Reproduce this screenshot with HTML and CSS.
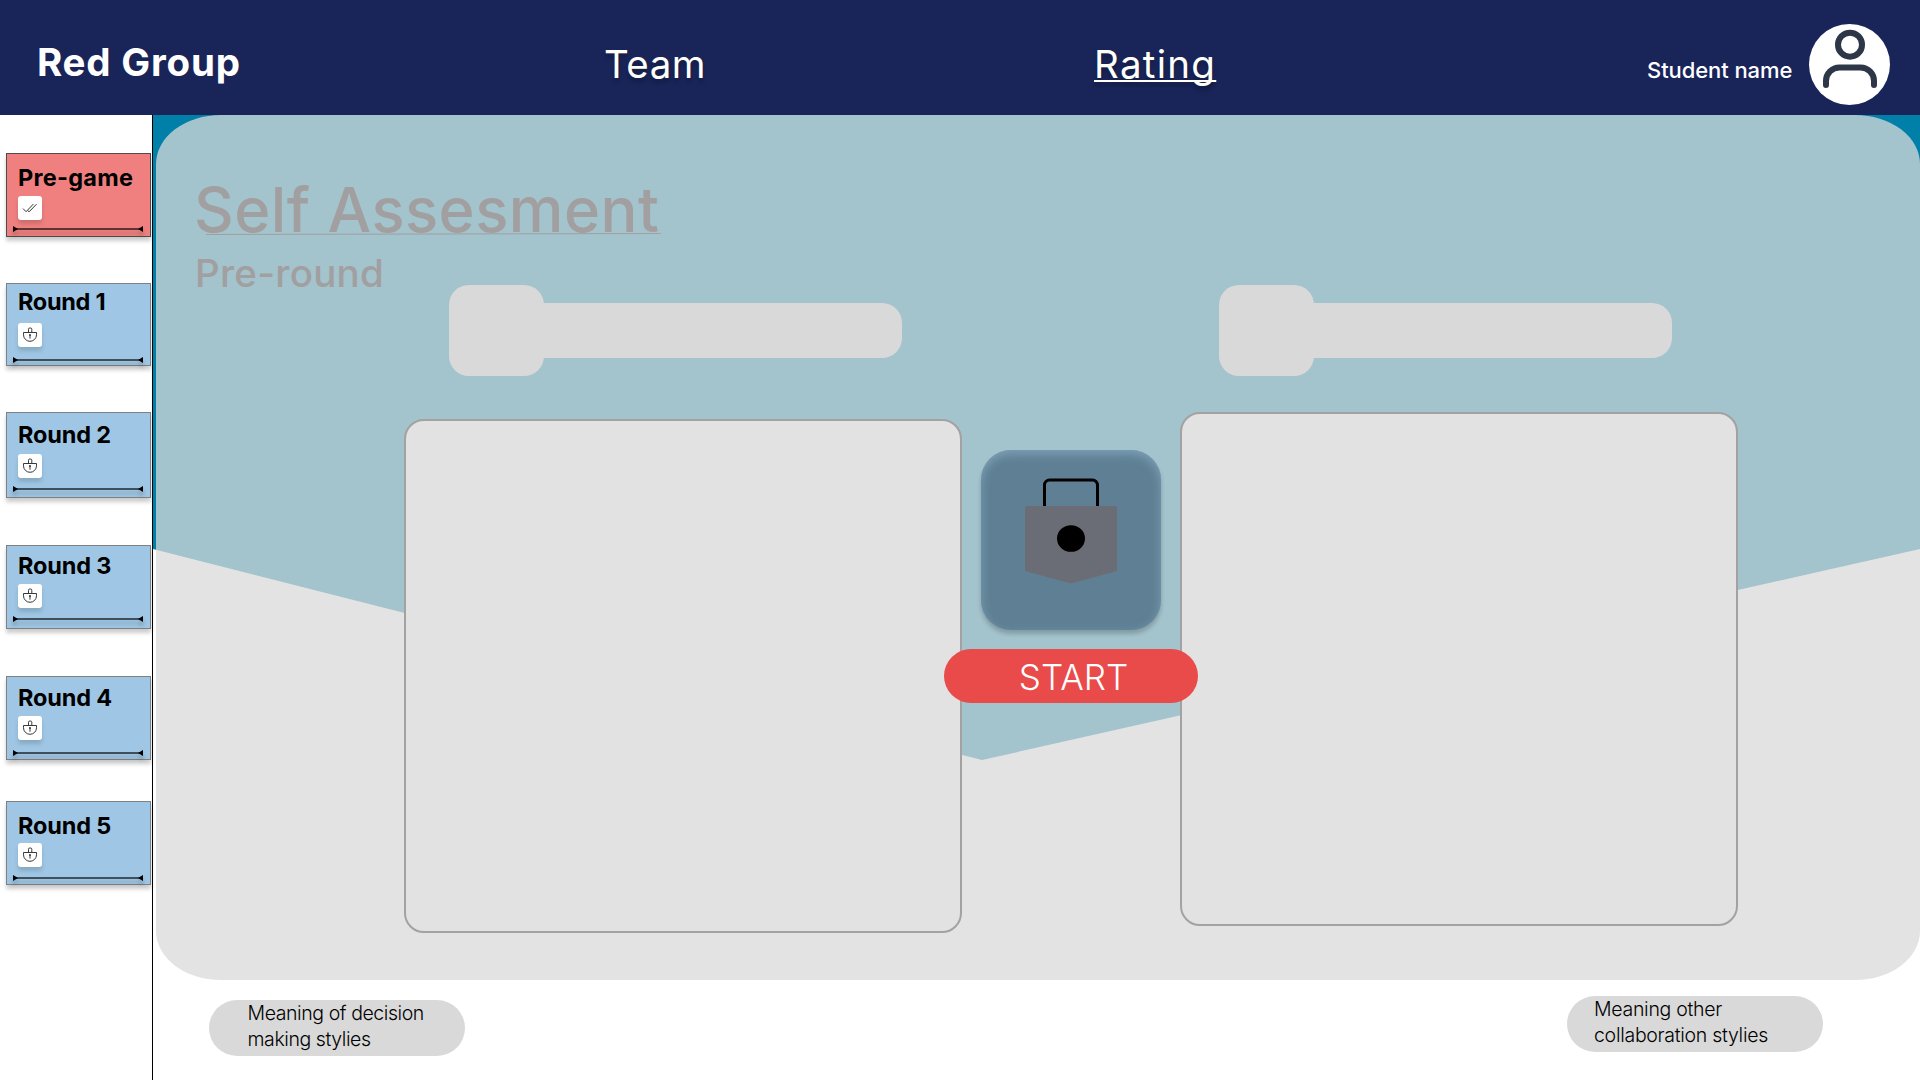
FILE: index.html
```html
<!DOCTYPE html>
<html lang="en">
<head>
<meta charset="utf-8">
<title>Self Assesment</title>
<link rel="stylesheet" href="styles.css">
</head>
<body>
<svg class="defs" width="0" height="0" aria-hidden="true">
  <symbol id="lock" viewBox="0 0 24 24">
    <path d="M5.500 9.500h13v2.300a6.500 6.500 0 0 1-13 0zM10.500 9.200V6.300a1.300 1.300 0 0 1 1.300-1.300h.7a1.300 1.300 0 0 1 1.300 1.300v2.900M12 12v3.700" fill="none" stroke="#222" stroke-width=".9"/>
    <circle cx="12" cy="11.900" r=".9" fill="#222"/>
  </symbol>
  <symbol id="checks" viewBox="0 0 24 24">
    <path d="m5 12.600 3.100 3.100 7.200-7.600M9.900 14.700l1.200 1.100 7.400-7.600" fill="none" stroke="#333" stroke-width="1"/>
  </symbol>
  <symbol id="rail" viewBox="0 0 130 10">
    <path d="M3 5h124" stroke="#000" stroke-opacity=".6" stroke-width="2"/>
    <path d="M0 2l5 3-5 3zM130 2l-5 3 5 3z" fill="#000"/>
  </symbol>
</svg>

<header class="topbar">
  <div class="brand">Red Group</div>
  <nav class="nav">
    <a class="nav-link team">Team</a>
    <a class="nav-link rating">Rating</a>
  </nav>
  <div class="user">
    <span class="user-name">Student name</span>
    <span class="avatar">
      <svg width="81" height="81" viewBox="0 0 81 81" fill="none" stroke="#2d3748" stroke-width="6" stroke-linecap="round">
        <circle cx="41" cy="20.700" r="12"/>
        <path d="M17 61v-4a13.500 13.500 0 0 1 13.500-13.500h21A13.500 13.500 0 0 1 65 57v4"/>
      </svg>
    </span>
  </div>
</header>

<div class="layout">
  <aside class="sidebar">
    <section class="card pregame"><h2>Pre-game</h2><svg class="badge"><use href="#checks"/></svg><svg class="rail"><use href="#rail"/></svg></section>
    <section class="card round1"><h2>Round 1</h2><svg class="badge"><use href="#lock"/></svg><svg class="rail"><use href="#rail"/></svg></section>
    <section class="card round2"><h2>Round 2</h2><svg class="badge"><use href="#lock"/></svg><svg class="rail"><use href="#rail"/></svg></section>
    <section class="card round3"><h2>Round 3</h2><svg class="badge"><use href="#lock"/></svg><svg class="rail"><use href="#rail"/></svg></section>
    <section class="card round4"><h2>Round 4</h2><svg class="badge"><use href="#lock"/></svg><svg class="rail"><use href="#rail"/></svg></section>
    <section class="card round5"><h2>Round 5</h2><svg class="badge"><use href="#lock"/></svg><svg class="rail"><use href="#rail"/></svg></section>
  </aside>

  <main class="main">
    <div class="backdrop"></div>
    <div class="panel">
      <div class="heading">
        <h1>Self Assesment</h1>
        <svg class="rule" width="455" height="3"><path d="M0 1.500 455 .5" stroke="#a19f9f"/></svg>
        <p>Pre-round</p>
      </div>
      <div class="columns">
        <div class="column left">
          <div class="label"><span class="knob"></span><span class="bar"></span></div>
          <div class="box"></div>
        </div>
        <div class="center">
          <div class="tile">
            <svg width="180" height="180" viewBox="0 0 180 180">
              <path d="M63.500 56V35a5 5 0 0 1 5-5h43a5 5 0 0 1 5 5v21" fill="none" stroke="#000" stroke-width="3"/>
              <path d="M45.500 56h89a1.500 1.500 0 0 1 1.500 1.500V120q0 1-1.500 1.500L92 133q-2 .6-4 0l-42.500-11.500Q44 121 44 120V57.500A1.500 1.500 0 0 1 45.500 56z" fill="#6b6d76"/>
              <ellipse cx="90" cy="88.500" rx="14" ry="13.300"/>
            </svg>
          </div>
          <button class="start">START</button>
        </div>
        <div class="column right">
          <div class="label"><span class="knob"></span><span class="bar"></span></div>
          <div class="box"></div>
        </div>
      </div>
    </div>
    <footer class="footer">
      <a class="pill decision">Meaning of decision<br>making stylies</a>
      <a class="pill collab">Meaning other<br>collaboration stylies</a>
    </footer>
  </main>
</div>
</body>
</html>
```
FILE: styles.css
```css
* { box-sizing: border-box; margin: 0; }
body {
  width: 1920px;
  height: 1080px;
  overflow: hidden;
  background: #fff;
  font-family: Inter, "Liberation Sans", sans-serif;
}
.defs { position: absolute; }

/* Header */
.topbar {
  display: flex;
  height: 115px;
  background: #192459;
  color: #fff;
}
.brand {
  width: 604px;
  padding: 42px 0 0 37px;
  font-size: 38.5px;
  font-weight: 700;
  line-height: 40px;
  letter-spacing: .8px;
}
.nav { display: flex; width: 1041px; padding-top: 44px; }
.nav-link {
  font-size: 38.5px;
  font-weight: 400;
  line-height: 40px;
  color: #fffff8;
  text-shadow: 0 4px 4px rgba(0, 0, 0, .25);
}
.team { width: 490px; letter-spacing: .5px; }
.rating {
  letter-spacing: 1.3px;
  text-decoration: underline 2px;
  text-underline-offset: 2px;
  text-decoration-skip-ink: none;
}
.user { display: flex; flex: 1; }
.user-name {
  width: 164px;
  padding: 58px 0 0 2px;
  font-size: 22px;
  font-weight: 500;
  line-height: 24px;
  letter-spacing: -.08px;
  white-space: nowrap;
}
.avatar {
  width: 81px;
  height: 81px;
  margin-top: 24px;
  border-radius: 50%;
  background: #fff;
}
.avatar svg { display: block; }

/* Layout */
.layout { display: flex; height: 965px; }
.sidebar {
  display: flex;
  flex: none;
  flex-direction: column;
  width: 153px;
  padding: 38px 0 0 6px;
  border-right: 1px solid #000;
}

/* Sidebar cards */
.card {
  display: grid;
  grid-template-rows: calc(var(--icon) - 1px) calc(var(--rail) - var(--icon) - 5px) 10px;
  flex: none;
  width: 145px;
  height: var(--h);
  margin-bottom: var(--gap, 46px);
  border: 1px solid #808080;
  background: #9fc7e5;
  box-shadow: 0 4px 4px rgba(0, 0, 0, .2);
}
.card h2 {
  padding: calc(var(--base) - 21px) 0 0 11px;
  font-size: 23.5px;
  font-weight: 700;
  line-height: 24px;
  letter-spacing: -.15px;
  white-space: nowrap;
}
.badge {
  width: 24px;
  height: 24px;
  margin-left: 11px;
  border-radius: 3px;
  background: #fff;
  box-shadow: 0 4px 4px rgba(0, 0, 0, .15);
}
.rail {
  width: 130px;
  height: 10px;
  margin-left: 6px;
  overflow: visible;
  filter: drop-shadow(0 4px 2px rgba(0, 0, 0, .3));
}
.pregame { --base: 33px; --icon: 43px; --rail: 76px; --h: 84px; background: #f08080; border-color: #4d4d4d; }
.pregame h2 { letter-spacing: .26px; }
.round1 { --base: 27px; --icon: 40px; --rail: 77px; --h: 83px; }
.round1 h2 { letter-spacing: -.3px; }
.round2 { --base: 31px; --icon: 42px; --rail: 77px; --h: 86px; --gap: 47px; }
.round3 { --base: 29px; --icon: 39px; --rail: 74px; --h: 84px; --gap: 47px; }
.round4 { --base: 30px; --icon: 40px; --rail: 77px; --h: 84px; --gap: 41px; }
.round5 { --base: 33px; --icon: 42px; --rail: 77px; --h: 84px; }

/* Main panel */
.main { position: relative; flex: 1; padding-left: 3px; }
.backdrop {
  position: absolute;
  inset: 0;
  background: #007fa9;
  clip-path: polygon(0 0, 100% 0, 100% 434px, 829px 645px, 0 434px);
}
.panel {
  position: relative;
  height: 865px;
  padding-top: 61px;
  border-radius: 65px / 49px;
  background: rgba(217, 217, 217, .75);
}
.heading { height: 109px; padding-left: 38px; color: #a19f9f; }
.heading h1 {
  height: 57px;
  font-size: 61.5px;
  font-weight: 500;
  line-height: 68px;
  letter-spacing: .49px;
}
.rule { display: block; margin-left: 12px; }
.heading p {
  padding: 19px 0 0 1px;
  font-size: 38.5px;
  font-weight: 500;
  line-height: 36px;
  letter-spacing: .25px;
}
.columns { display: flex; padding-left: 248px; }
.column { width: 558px; }
.label { display: flex; align-items: center; height: 91px; }
.left .label { margin: 0 0 43px 45px; }
.right .label { margin: 0 0 36px 39px; }
.knob { width: 95px; height: 91px; border-radius: 20px; background: #d9d9d9; }
.bar {
  width: 378px;
  height: 55px;
  margin-left: -20px;
  border-radius: 0 20px 20px 0;
  background: #d9d9d9;
}
.box {
  height: 514px;
  border: 2px solid #a3a1a1;
  border-radius: 20px;
  background: #e2e2e2;
}

/* Lock tile and start button */
.center {
  z-index: 1;
  display: flex;
  flex-direction: column;
  align-items: center;
  width: 218px;
  padding-top: 165px;
}
.tile {
  height: 180px;
  border-radius: 30px;
  background: #5f8094;
  box-shadow: 0 4px 4px rgba(0, 0, 0, .2), inset 0 4px 10px rgba(145, 180, 205, .6);
}
.tile svg { display: block; }
.start {
  flex: none;
  width: 254px;
  height: 54px;
  margin: 19px 0 0;
  padding: 2px 0 0 5px;
  border: 0;
  border-radius: 27px;
  background: #e94a4a;
  color: #fff;
  font: 300 35px/52px Inter, "Liberation Sans", sans-serif;
  letter-spacing: 0;
}

/* Footer links */
.footer {
  position: relative;
  display: flex;
  justify-content: space-between;
  padding: 16px 97px 0 53px;
}
.pill {
  width: 256px;
  height: 56px;
  border-radius: 28px;
  background: #d9d9d9;
  font-size: 19.5px;
  font-weight: 300;
  line-height: 26px;
  letter-spacing: -.42px;
  white-space: nowrap;
}
.decision { margin-top: 4px; padding-left: 38.5px; }
.collab { padding-left: 27px; letter-spacing: -.28px; }
```
